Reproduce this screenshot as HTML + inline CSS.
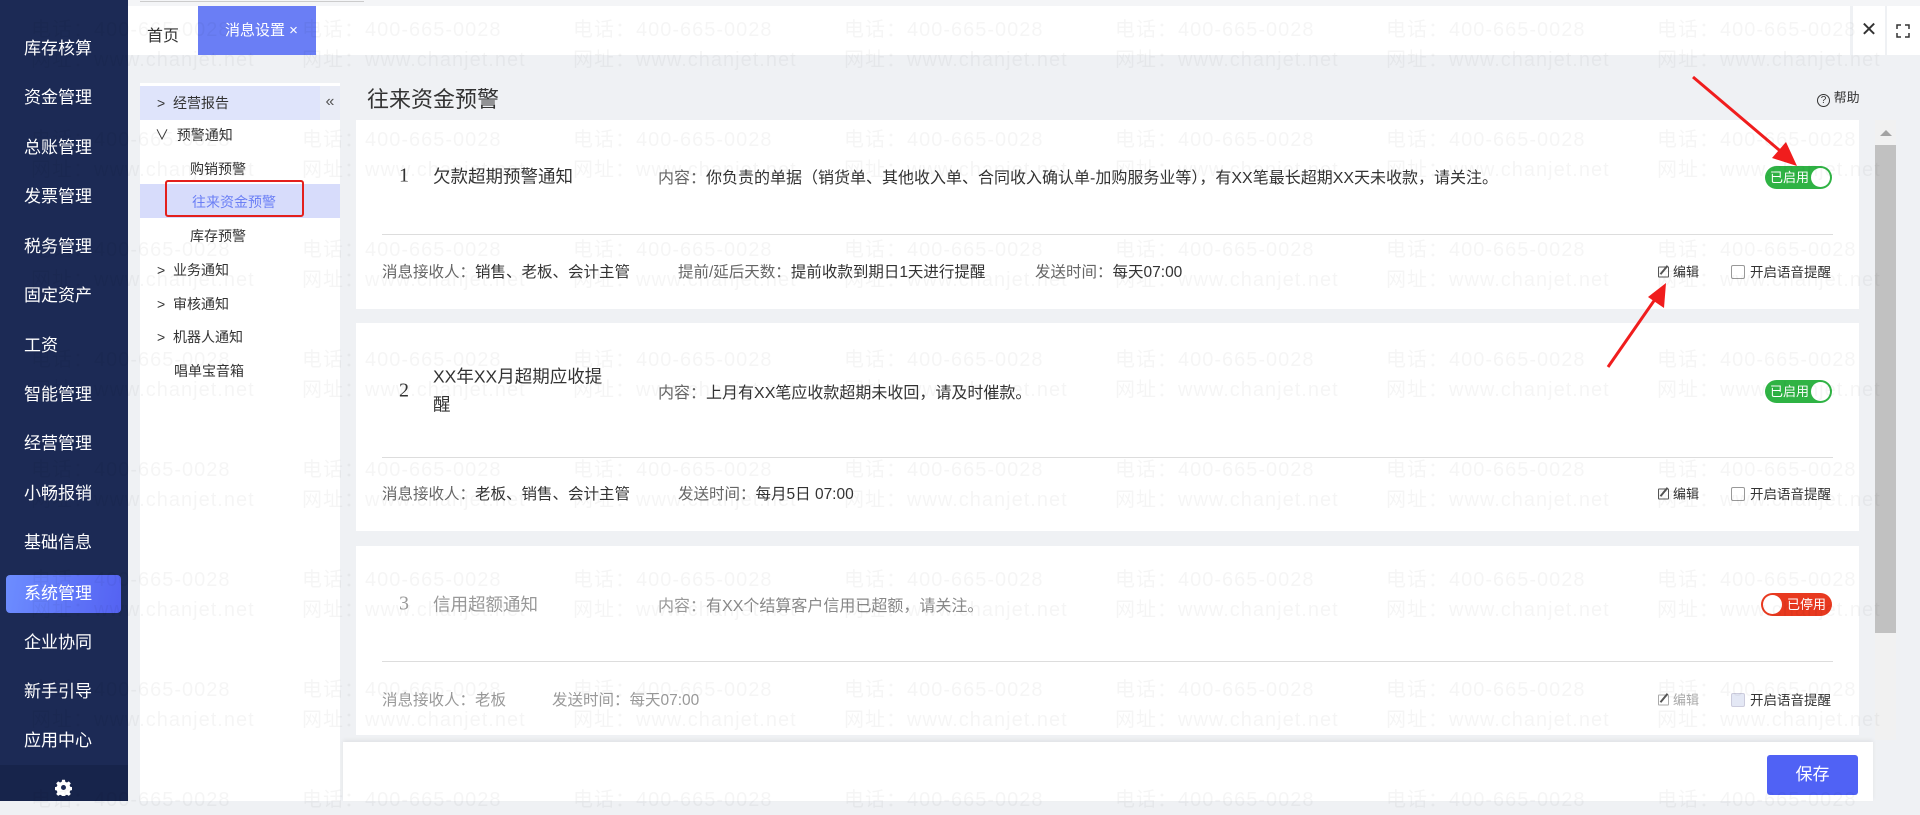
<!DOCTYPE html>
<html><head><meta charset="utf-8">
<style>
*{margin:0;padding:0;box-sizing:border-box}
body{width:1920px;height:801px;overflow:hidden;position:relative;background:#eff1f4;font-family:"Liberation Sans","Noto Sans CJK SC",sans-serif;color:#333}
.a{position:absolute;white-space:nowrap}
.side{left:0;top:0;width:128px;height:801px;background:#1c2a55}
.si{position:absolute;left:24px;color:#fff;font-size:17px;line-height:20px;transform:translateY(-10px)}
.t{position:absolute;font-size:14px;line-height:16px;transform:translateY(-8px);white-space:nowrap}
.card{position:absolute;left:356px;width:1503px;background:#fff}
.c{position:absolute;white-space:nowrap;transform:translateY(-50%)}
.wm{position:absolute;font-size:20px;color:rgba(0,0,0,0.04);white-space:nowrap;line-height:30px;letter-spacing:1px;pointer-events:none}
.tog{position:absolute;height:23px;border-radius:12px;color:#fff;font-size:13px;line-height:23px}
.knob{position:absolute;top:2px;width:19px;height:19px;border-radius:50%;background:#fff}
.cb{display:inline-block;width:14px;height:14px;border:1px solid #999;border-radius:2px;vertical-align:-2px;margin-right:5px;background:#fff}
.ed{display:inline-block;width:11px;height:11px;border:1px solid #555;border-radius:1px;margin-right:4px;vertical-align:-1px;position:relative}
.ed:after{content:"";position:absolute;left:4px;top:-3px;width:2px;height:11px;background:#555;transform:rotate(40deg)}
</style></head><body>

<div class="a side">
  <div style="position:absolute;left:0;top:765px;width:128px;height:36px;background:#17244b"></div>
  <div style="position:absolute;left:6px;top:575px;width:115px;height:38px;border-radius:4px;background:linear-gradient(100deg,#6d8dff,#5462f2)"></div>
  <div class="si" style="top:49px">库存核算</div>
  <div class="si" style="top:98px">资金管理</div>
  <div class="si" style="top:148px">总账管理</div>
  <div class="si" style="top:197px">发票管理</div>
  <div class="si" style="top:247px">税务管理</div>
  <div class="si" style="top:296px">固定资产</div>
  <div class="si" style="top:346px">工资</div>
  <div class="si" style="top:395px">智能管理</div>
  <div class="si" style="top:444px">经营管理</div>
  <div class="si" style="top:494px">小畅报销</div>
  <div class="si" style="top:543px">基础信息</div>
  <div class="si" style="top:594px">系统管理</div>
  <div class="si" style="top:643px">企业协同</div>
  <div class="si" style="top:692px">新手引导</div>
  <div class="si" style="top:741px">应用中心</div>
  <svg style="position:absolute;left:55px;top:779px" width="17" height="17" viewBox="0 0 24 24"><path fill="#fff" d="M10 1h4l.6 3 2.3 1 2.6-1.7 2.8 2.8-1.7 2.6 1 2.3 3 .6v4l-3 .6-1 2.3 1.7 2.6-2.8 2.8-2.6-1.7-2.3 1-.6 3h-4l-.6-3-2.3-1-2.6 1.7-2.8-2.8 1.7-2.6-1-2.3-3-.6v-4l3-.6 1-2.3-1.7-2.6 2.8-2.8 2.6 1.7 2.3-1z"/><circle cx="12" cy="12" r="3.5" fill="#1c2a55"/></svg>
</div>

<div class="a" style="left:128px;top:0;width:1792px;height:6px;background:#f4f5f7"></div>
<div class="a" style="left:140px;top:1px;width:224px;height:1px;background:#ccc"></div>
<div class="a" style="left:128px;top:6px;width:1722px;height:49px;background:#fff"></div>
<div class="a" style="left:147px;top:22px;font-size:16px;color:#333">首页</div>
<div class="a" style="left:198px;top:6px;width:118px;height:49px;background:#6a7ef5;color:#fff;font-size:15px;line-height:49px;padding-left:27px">消息设置 ×</div>
<div class="a" style="left:1853px;top:6px;width:32px;height:49px;background:#fff;text-align:center;font-size:20px;line-height:49px;color:#333">✕</div>
<div class="a" style="left:1887px;top:6px;width:33px;height:49px;background:#fff"></div>
<svg class="a" style="left:1896px;top:24px" width="14" height="14" viewBox="0 0 14 14" fill="none" stroke="#333" stroke-width="1.5"><path d="M1 5V1h4M9 1h4v4M13 9v4H9M5 13H1V9"/></svg>

<div class="a" style="left:140px;top:83px;width:200px;height:718px;background:#fff"></div>
<div class="a" style="left:140px;top:86px;width:190px;height:34px;background:#dfe4fb"></div>
<div class="a" style="left:320px;top:86px;width:20px;height:34px;background:#e9ecf6;color:#555;font-size:16px;line-height:32px;text-align:center">«</div>
<div class="a" style="left:140px;top:184px;width:200px;height:34px;background:#d7dcfb"></div>
<div class="a" style="left:165px;top:180px;width:139px;height:37px;border:2px solid #e3201c;border-radius:3px"></div>
<div class="t" style="left:157px;top:103px">&gt;&nbsp;&nbsp;经营报告</div>
<div class="t" style="left:155px;top:135px">∨&nbsp;&nbsp;预警通知</div>
<div class="t" style="left:190px;top:169px">购销预警</div>
<div class="t" style="left:192px;top:202px;color:#6b7ff5">往来资金预警</div>
<div class="t" style="left:190px;top:236px">库存预警</div>
<div class="t" style="left:157px;top:270px">&gt;&nbsp;&nbsp;业务通知</div>
<div class="t" style="left:157px;top:304px">&gt;&nbsp;&nbsp;审核通知</div>
<div class="t" style="left:157px;top:337px">&gt;&nbsp;&nbsp;机器人通知</div>
<div class="t" style="left:174px;top:371px">唱单宝音箱</div>

<div class="a" style="left:367px;top:82px;font-size:22px;color:#333">往来资金预警</div>
<div class="a" style="left:1817px;top:87px;font-size:13px;color:#333"><span style="display:inline-block;width:13px;height:13px;border:1px solid #333;border-radius:50%;font-size:10px;line-height:11px;text-align:center;vertical-align:-1px">?</span> 帮助</div>

<div class="card" style="top:120px;height:189px">
  <div class="c" style="left:43px;top:56px;font-family:'Liberation Serif',serif;font-size:20px">1</div>
  <div class="c" style="left:77px;top:56px;font-size:17.5px">欠款超期预警通知</div>
  <div class="c" style="left:302px;top:56px;font-size:16px"><span style="color:#666">内容：</span>你负责的单据（销货单、其他收入单、合同收入确认单-加购服务业等），有XX笔最长超期XX天未收款，请关注。</div>
  <div class="tog" style="left:1409px;top:46px;width:67px;background:#2fb344;padding-left:5px">已启用<div class="knob" style="right:2px"></div></div>
  <div class="a" style="left:26px;top:114px;width:1451px;height:1px;background:#ddd"></div>
  <div class="c" style="left:26px;top:151px;font-size:15.5px"><span style="color:#666">消息接收人：</span>销售、老板、会计主管</div>
  <div class="c" style="left:322px;top:151px;font-size:15.5px"><span style="color:#666">提前/延后天数：</span>提前收款到期日1天进行提醒</div>
  <div class="c" style="left:679px;top:151px;font-size:15.5px"><span style="color:#666">发送时间：</span>每天07:00</div>
  <div class="c" style="left:1302px;top:151px;font-size:13px"><span class="ed"></span>编辑</div>
  <div class="c" style="left:1375px;top:151px;font-size:13.5px"><span class="cb"></span>开启语音提醒</div>
</div>

<div class="card" style="top:323px;height:208px">
  <div class="c" style="left:43px;top:68px;font-family:'Liberation Serif',serif;font-size:20px">2</div>
  <div class="c" style="left:77px;top:53px;font-size:17.5px">XX年XX月超期应收提</div>
  <div class="c" style="left:77px;top:81px;font-size:17.5px">醒</div>
  <div class="c" style="left:302px;top:68px;font-size:16px"><span style="color:#666">内容：</span>上月有XX笔应收款超期未收回，请及时催款。</div>
  <div class="tog" style="left:1409px;top:57px;width:67px;background:#2fb344;padding-left:5px">已启用<div class="knob" style="right:2px"></div></div>
  <div class="a" style="left:26px;top:134px;width:1451px;height:1px;background:#ddd"></div>
  <div class="c" style="left:26px;top:170px;font-size:15.5px"><span style="color:#666">消息接收人：</span>老板、销售、会计主管</div>
  <div class="c" style="left:322px;top:170px;font-size:15.5px"><span style="color:#666">发送时间：</span>每月5日 07:00</div>
  <div class="c" style="left:1302px;top:170px;font-size:13px"><span class="ed"></span>编辑</div>
  <div class="c" style="left:1375px;top:170px;font-size:13.5px"><span class="cb"></span>开启语音提醒</div>
</div>

<div class="card" style="top:546px;height:189px;color:#999">
  <div class="c" style="left:43px;top:58px;font-family:'Liberation Serif',serif;font-size:20px">3</div>
  <div class="c" style="left:77px;top:58px;font-size:17.5px">信用超额通知</div>
  <div class="c" style="left:302px;top:58px;font-size:16px">内容：<span style="color:#888">有XX个结算客户信用已超额，请关注。</span></div>
  <div class="tog" style="left:1405px;top:47px;width:71px;background:#e8391f;padding-left:26px">已停用<div class="knob" style="left:2px"></div></div>
  <div class="a" style="left:26px;top:115px;width:1451px;height:1px;background:#ddd"></div>
  <div class="c" style="left:26px;top:153px;font-size:15.5px">消息接收人：老板</div>
  <div class="c" style="left:196px;top:153px;font-size:15.5px">发送时间：每天07:00</div>
  <div class="c" style="left:1302px;top:153px;font-size:13px;color:#aaa"><span class="ed" style="border-color:#aaa"></span>编辑</div>
  <div class="c" style="left:1375px;top:153px;font-size:13.5px;color:#333"><span class="cb" style="background:#e4e8f5;border-color:#ccd"></span>开启语音提醒</div>
</div>

<div class="a" style="left:1875px;top:120px;width:21px;height:620px;background:#f1f1f1"></div>
<div class="a" style="left:1880px;top:130px;width:0;height:0;border-left:6px solid transparent;border-right:6px solid transparent;border-bottom:6px solid #a3a3a3"></div>
<div class="a" style="left:1875px;top:145px;width:21px;height:488px;background:#c1c1c1"></div>

<div class="a" style="left:343px;top:742px;width:1530px;height:59px;background:#fff;box-shadow:0 -2px 4px rgba(0,0,0,0.06)"></div>
<div class="a" style="left:1767px;top:755px;width:91px;height:40px;background:#5062f5;border-radius:3px;color:#fff;font-size:17px;line-height:40px;text-align:center">保存</div>

<svg class="a" style="left:0;top:0" width="1920" height="801">
  <line x1="1693" y1="77" x2="1785" y2="155" stroke="#f01d1d" stroke-width="3"/>
  <polygon points="1797,166 1772,158 1786,142" fill="#f01d1d"/>
  <line x1="1608" y1="367" x2="1658" y2="295" stroke="#f01d1d" stroke-width="3"/>
  <polygon points="1666,283 1664,308 1648,297" fill="#f01d1d"/>
</svg>

<div class="a" style="left:0;top:0;width:1920px;height:801px;pointer-events:none">
<div class="wm" style="left:31px;top:15px">电话：400-665-0028<br>网址：www.chanjet.net</div><div class="wm" style="left:302px;top:15px">电话：400-665-0028<br>网址：www.chanjet.net</div><div class="wm" style="left:573px;top:15px">电话：400-665-0028<br>网址：www.chanjet.net</div><div class="wm" style="left:844px;top:15px">电话：400-665-0028<br>网址：www.chanjet.net</div><div class="wm" style="left:1115px;top:15px">电话：400-665-0028<br>网址：www.chanjet.net</div><div class="wm" style="left:1386px;top:15px">电话：400-665-0028<br>网址：www.chanjet.net</div><div class="wm" style="left:1657px;top:15px">电话：400-665-0028<br>网址：www.chanjet.net</div>
<div class="wm" style="left:31px;top:125px">电话：400-665-0028<br>网址：www.chanjet.net</div><div class="wm" style="left:302px;top:125px">电话：400-665-0028<br>网址：www.chanjet.net</div><div class="wm" style="left:573px;top:125px">电话：400-665-0028<br>网址：www.chanjet.net</div><div class="wm" style="left:844px;top:125px">电话：400-665-0028<br>网址：www.chanjet.net</div><div class="wm" style="left:1115px;top:125px">电话：400-665-0028<br>网址：www.chanjet.net</div><div class="wm" style="left:1386px;top:125px">电话：400-665-0028<br>网址：www.chanjet.net</div><div class="wm" style="left:1657px;top:125px">电话：400-665-0028<br>网址：www.chanjet.net</div>
<div class="wm" style="left:31px;top:235px">电话：400-665-0028<br>网址：www.chanjet.net</div><div class="wm" style="left:302px;top:235px">电话：400-665-0028<br>网址：www.chanjet.net</div><div class="wm" style="left:573px;top:235px">电话：400-665-0028<br>网址：www.chanjet.net</div><div class="wm" style="left:844px;top:235px">电话：400-665-0028<br>网址：www.chanjet.net</div><div class="wm" style="left:1115px;top:235px">电话：400-665-0028<br>网址：www.chanjet.net</div><div class="wm" style="left:1386px;top:235px">电话：400-665-0028<br>网址：www.chanjet.net</div><div class="wm" style="left:1657px;top:235px">电话：400-665-0028<br>网址：www.chanjet.net</div>
<div class="wm" style="left:31px;top:345px">电话：400-665-0028<br>网址：www.chanjet.net</div><div class="wm" style="left:302px;top:345px">电话：400-665-0028<br>网址：www.chanjet.net</div><div class="wm" style="left:573px;top:345px">电话：400-665-0028<br>网址：www.chanjet.net</div><div class="wm" style="left:844px;top:345px">电话：400-665-0028<br>网址：www.chanjet.net</div><div class="wm" style="left:1115px;top:345px">电话：400-665-0028<br>网址：www.chanjet.net</div><div class="wm" style="left:1386px;top:345px">电话：400-665-0028<br>网址：www.chanjet.net</div><div class="wm" style="left:1657px;top:345px">电话：400-665-0028<br>网址：www.chanjet.net</div>
<div class="wm" style="left:31px;top:455px">电话：400-665-0028<br>网址：www.chanjet.net</div><div class="wm" style="left:302px;top:455px">电话：400-665-0028<br>网址：www.chanjet.net</div><div class="wm" style="left:573px;top:455px">电话：400-665-0028<br>网址：www.chanjet.net</div><div class="wm" style="left:844px;top:455px">电话：400-665-0028<br>网址：www.chanjet.net</div><div class="wm" style="left:1115px;top:455px">电话：400-665-0028<br>网址：www.chanjet.net</div><div class="wm" style="left:1386px;top:455px">电话：400-665-0028<br>网址：www.chanjet.net</div><div class="wm" style="left:1657px;top:455px">电话：400-665-0028<br>网址：www.chanjet.net</div>
<div class="wm" style="left:31px;top:565px">电话：400-665-0028<br>网址：www.chanjet.net</div><div class="wm" style="left:302px;top:565px">电话：400-665-0028<br>网址：www.chanjet.net</div><div class="wm" style="left:573px;top:565px">电话：400-665-0028<br>网址：www.chanjet.net</div><div class="wm" style="left:844px;top:565px">电话：400-665-0028<br>网址：www.chanjet.net</div><div class="wm" style="left:1115px;top:565px">电话：400-665-0028<br>网址：www.chanjet.net</div><div class="wm" style="left:1386px;top:565px">电话：400-665-0028<br>网址：www.chanjet.net</div><div class="wm" style="left:1657px;top:565px">电话：400-665-0028<br>网址：www.chanjet.net</div>
<div class="wm" style="left:31px;top:675px">电话：400-665-0028<br>网址：www.chanjet.net</div><div class="wm" style="left:302px;top:675px">电话：400-665-0028<br>网址：www.chanjet.net</div><div class="wm" style="left:573px;top:675px">电话：400-665-0028<br>网址：www.chanjet.net</div><div class="wm" style="left:844px;top:675px">电话：400-665-0028<br>网址：www.chanjet.net</div><div class="wm" style="left:1115px;top:675px">电话：400-665-0028<br>网址：www.chanjet.net</div><div class="wm" style="left:1386px;top:675px">电话：400-665-0028<br>网址：www.chanjet.net</div><div class="wm" style="left:1657px;top:675px">电话：400-665-0028<br>网址：www.chanjet.net</div>
<div class="wm" style="left:31px;top:785px">电话：400-665-0028</div><div class="wm" style="left:302px;top:785px">电话：400-665-0028</div><div class="wm" style="left:573px;top:785px">电话：400-665-0028</div><div class="wm" style="left:844px;top:785px">电话：400-665-0028</div><div class="wm" style="left:1115px;top:785px">电话：400-665-0028</div><div class="wm" style="left:1386px;top:785px">电话：400-665-0028</div><div class="wm" style="left:1657px;top:785px">电话：400-665-0028</div>
</div>
</body></html>
